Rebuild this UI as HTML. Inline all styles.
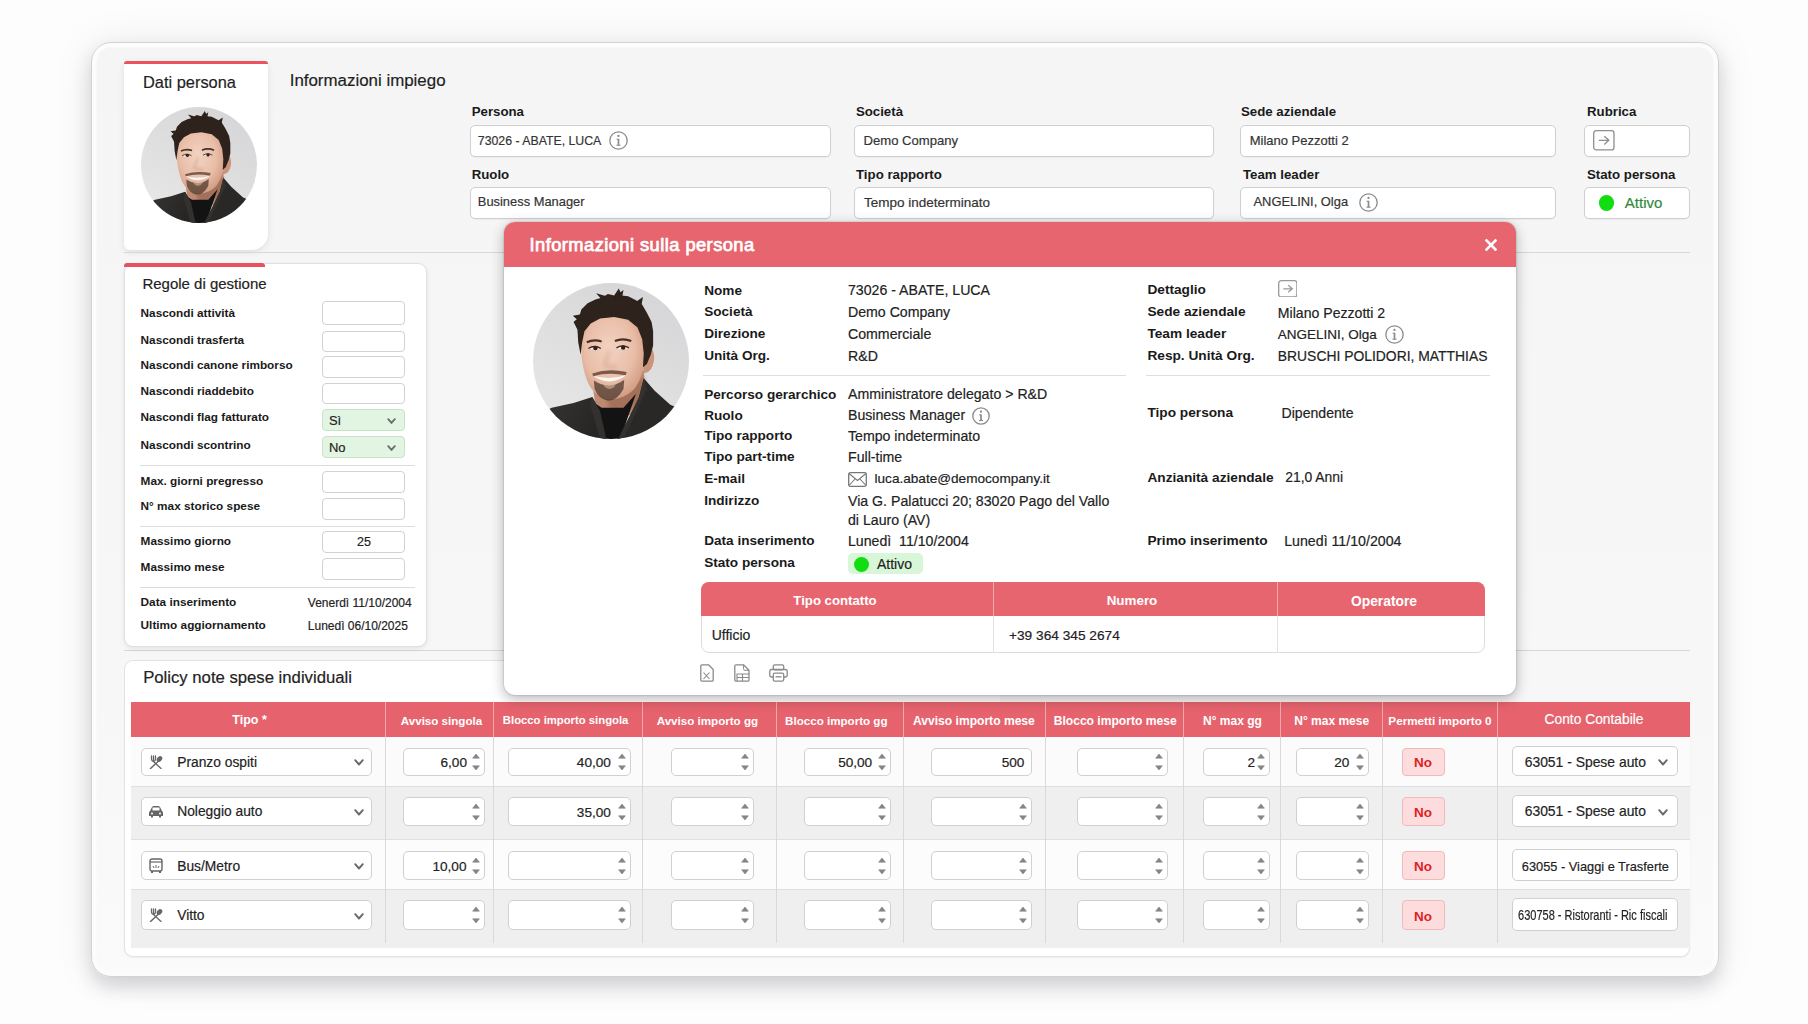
<!DOCTYPE html><html><head><meta charset="utf-8"><style>
html,body{margin:0;padding:0;background:#fff;}
#root{position:relative;width:1808px;height:1024px;overflow:hidden;background:#fdfdfd;font-family:"Liberation Sans",sans-serif;}
.t{position:absolute;white-space:nowrap;}
.r{-webkit-text-stroke:0.18px currentColor;}
.b{position:absolute;box-sizing:border-box;}
</style></head><body><div id="root">
<div class="b" style="left:91.0px;top:42.0px;width:1628.0px;height:935.0px;border-radius:20px;background:linear-gradient(#f5f5f5, #f7f7f7 70%, #fafafa);border:1.5px solid #d2d2d4;box-shadow:0 10px 18px rgba(40,40,60,0.17), 0 0 40px rgba(0,0,0,0.08), inset 0 0 0 4.5px #fcfcfc;"></div>
<div class="b" style="left:124.0px;top:61.0px;width:144.0px;height:189.0px;border-radius:7px 7px 16px 6px;background:#fff;box-shadow:0 2px 6px rgba(0,0,0,0.10);"></div>
<div class="b" style="left:124.0px;top:60.8px;width:144.0px;height:3.5px;border-radius:4px 4px 0 0;background:#e8535f;"></div>
<div class="t  r" style="left:143.0px;top:74.12px;font-size:16.4px;line-height:16.4px;color:#1e1e1e;">Dati persona</div>
<svg class="b" style="left:140.5px;top:107.0px;" width="116" height="116" viewBox="0 0 100 100">
<defs>
 <clipPath id="clipp1"><circle cx="50" cy="50" r="50"/></clipPath>
 <linearGradient id="bgp1" x1="0.8" y1="0" x2="0.2" y2="1"><stop offset="0" stop-color="#d5d5d7"/><stop offset="1" stop-color="#e8e8e8"/></linearGradient>
 <radialGradient id="skp1" cx="0.45" cy="0.4" r="0.7"><stop offset="0" stop-color="#f3d3c2"/><stop offset="0.55" stop-color="#e9bea8"/><stop offset="0.85" stop-color="#d49f86"/><stop offset="1" stop-color="#b57c63"/></radialGradient>
 <linearGradient id="jkp1" x1="0" y1="0" x2="1" y2="0.3"><stop offset="0" stop-color="#393636"/><stop offset="1" stop-color="#282525"/></linearGradient>
 <filter id="blp1" x="-20%" y="-20%" width="140%" height="140%"><feGaussianBlur stdDeviation="1.3"/></filter>
 <filter id="bl2p1" x="-20%" y="-20%" width="140%" height="140%"><feGaussianBlur stdDeviation="0.45"/></filter>
</defs>
<g clip-path="url(#clipp1)">
 <rect x="0" y="0" width="100" height="100" fill="url(#bgp1)"/>
 <path d="M38 64 L71 56 L73 84 L41 86 Z" fill="#c08a72"/>
 <path d="M47 73 L71 60 L72 78 L50 83 Z" fill="#8f5f4c" filter="url(#blp1)" opacity="0.6"/>
 <path d="M31 38 C32 28 40 21 51 20.5 C62 21 70 28 71.5 40 C72 52 70 61 65 68 C60 73 54 75 48 74.5 C42 73.5 37 69 34.5 62 C32 55 30.5 47 31 38 Z" fill="url(#skp1)"/>
 <path d="M71.5 42 C75.5 39 78.5 44 77.5 50 C76.5 56 73 58.5 70.5 57.5 Z" fill="#cc957b"/>
 <g filter="url(#bl2p1)">
 <path d="M30.5 46 L29 38 L28.5 30 L26 25 L29.5 22 L31 17 L35 13 L40 10.5 L44 9.5 L48 7 L52 8 L55 3.5 L57 8 L61 8.5 L66 11 L70 14 L73 19 L76 25 L77 31 L77 40 L75.5 46 L73 52 L70.5 54 L71 45 L70 36 L67 28.5 L61 23.5 L52 21.8 L43 22.8 L37 26 L33 31 L31.5 38 Z" fill="#2d201a"/>
 <path d="M52 9 L58 4.5 L57 10 Z M44 10.5 L40.5 6.5 L47 8.5 Z M66 12 L70.5 9 L69.5 14.5 Z M29 24 L25.5 21 L31 20 Z" fill="#2d201a"/>
 </g>
 <path d="M35.5 42 Q39.5 39.6 43.5 42 Q39.5 43.6 35.5 42 Z" fill="#f4eeea"/>
 <path d="M53.5 41.6 Q57.5 39.2 61.5 41.6 Q57.5 43.2 53.5 41.6 Z" fill="#f4eeea"/>
 <circle cx="40" cy="41.7" r="1.45" fill="#2e211b"/>
 <circle cx="57.8" cy="41.3" r="1.45" fill="#2e211b"/>
 <path d="M35.5 42 Q39.5 39.4 43.5 42" stroke="#3a2720" stroke-width="0.8" fill="none"/>
 <path d="M53.5 41.6 Q57.5 39 61.5 41.6" stroke="#3a2720" stroke-width="0.8" fill="none"/>
 <path d="M34.5 38 Q39 35.8 44 37.5" stroke="#4a3026" stroke-width="1.4" fill="none"/>
 <path d="M52.5 37.2 Q57.5 35 63 37.2" stroke="#4a3026" stroke-width="1.4" fill="none"/>
 <path d="M49 43 Q47 50 46 52.5 Q49 55 53.5 53.5" stroke="#a9705a" stroke-width="1.5" fill="none" opacity="0.35" filter="url(#blp1)"/>
 <path d="M38 58 Q48 54.5 60 57 L59.5 59.2 Q48 57 38.5 59.8 Z" fill="#5e4034" opacity="0.8" filter="url(#bl2p1)"/>
 <path d="M38.5 59.5 Q49 67 60 59 Q49 62.5 38.5 59.5 Z" fill="#faf6f3"/>
 <path d="M39 62.5 Q49 69 58.5 62 L58 68 Q54 75.5 48 75.5 Q42 74.5 39.5 68 Z" fill="#4a362c" opacity="0.72" filter="url(#bl2p1)"/>
 <path d="M45 64.5 Q49 66.5 53 64.3 Q53 67.5 49 68 Q45.5 67.5 45 64.5 Z" fill="#e6bda8" opacity="0.55"/>
 <path d="M0 86 L12 80 L26 77 L38 73 L43 82 L46 100 L0 100 Z" fill="url(#jkp1)"/>
 <path d="M71 61 L78 69 L88 78 L100 83 L100 100 L54 100 L62 86 L68 73 Z" fill="#2a2727"/>
 <path d="M38 76 L44 80 L58 80 L66 71 L56 100 L45 100 Z" fill="#141313"/>
 <path d="M38 73 L43 82 L47 100 L43 100 L36.5 78 Z" fill="#333030"/>
 <path d="M71 61 L73 68 L58 100 L54.5 100 L68 73 Z" fill="#333030"/>
</g></svg>
<div class="t  r" style="left:289.7px;top:72.79px;font-size:16.9px;line-height:16.9px;color:#1e1e1e;">Informazioni impiego</div>
<div class="t " style="left:471.7px;top:104.78px;font-size:13.25px;line-height:13.25px;font-weight:700;color:#1a1a1a;">Persona</div>
<div class="t " style="left:855.9px;top:104.78px;font-size:13.25px;line-height:13.25px;font-weight:700;color:#1a1a1a;">Società</div>
<div class="t " style="left:1241.0px;top:104.78px;font-size:13.25px;line-height:13.25px;font-weight:700;color:#1a1a1a;">Sede aziendale</div>
<div class="t " style="left:1587.0px;top:104.78px;font-size:13.25px;line-height:13.25px;font-weight:700;color:#1a1a1a;">Rubrica</div>
<div class="t " style="left:471.7px;top:168.18px;font-size:13.25px;line-height:13.25px;font-weight:700;color:#1a1a1a;">Ruolo</div>
<div class="t " style="left:856.0px;top:168.18px;font-size:13.25px;line-height:13.25px;font-weight:700;color:#1a1a1a;">Tipo rapporto</div>
<div class="t " style="left:1243.0px;top:168.18px;font-size:13.25px;line-height:13.25px;font-weight:700;color:#1a1a1a;">Team leader</div>
<div class="t " style="left:1587.0px;top:168.18px;font-size:13.25px;line-height:13.25px;font-weight:700;color:#1a1a1a;">Stato persona</div>
<div class="b" style="left:469.5px;top:124.5px;width:361.5px;height:32.1px;background:#fff;border:1px solid #cfcfcf;border-radius:5px;box-shadow:0 1px 1px rgba(0,0,0,0.04);"></div>
<div class="b" style="left:469.5px;top:187.4px;width:361.5px;height:31.4px;background:#fff;border:1px solid #cfcfcf;border-radius:5px;box-shadow:0 1px 1px rgba(0,0,0,0.04);"></div>
<div class="b" style="left:854.0px;top:124.5px;width:360.0px;height:32.1px;background:#fff;border:1px solid #cfcfcf;border-radius:5px;box-shadow:0 1px 1px rgba(0,0,0,0.04);"></div>
<div class="b" style="left:854.0px;top:187.4px;width:360.0px;height:31.4px;background:#fff;border:1px solid #cfcfcf;border-radius:5px;box-shadow:0 1px 1px rgba(0,0,0,0.04);"></div>
<div class="b" style="left:1239.8px;top:124.5px;width:316.2px;height:32.1px;background:#fff;border:1px solid #cfcfcf;border-radius:5px;box-shadow:0 1px 1px rgba(0,0,0,0.04);"></div>
<div class="b" style="left:1239.8px;top:187.4px;width:316.2px;height:31.4px;background:#fff;border:1px solid #cfcfcf;border-radius:5px;box-shadow:0 1px 1px rgba(0,0,0,0.04);"></div>
<div class="b" style="left:1584.4px;top:124.5px;width:105.2px;height:32.1px;background:#fff;border:1px solid #cfcfcf;border-radius:5px;box-shadow:0 1px 1px rgba(0,0,0,0.04);"></div>
<div class="b" style="left:1584.4px;top:187.4px;width:105.2px;height:31.4px;background:#fff;border:1px solid #cfcfcf;border-radius:5px;box-shadow:0 1px 1px rgba(0,0,0,0.04);"></div>
<div class="t  r" style="left:477.8px;top:134.79px;font-size:12.3px;line-height:12.3px;color:#333;">73026 - ABATE, LUCA</div>
<svg class="b" style="left:609.0px;top:131.0px;" width="19" height="19" viewBox="0 0 19 19"><circle cx="9.5" cy="9.5" r="8.7" fill="none" stroke="#8a8a8a" stroke-width="1.3"/><rect x="8.65" y="7.789999999999999" width="1.7" height="6.2700000000000005" fill="#8a8a8a"/><rect x="7.6" y="7.789999999999999" width="1.9" height="1" fill="#8a8a8a"/><rect x="7.5" y="13.68" width="4" height="1.1" fill="#8a8a8a"/><circle cx="9.5" cy="4.94" r="1.15" fill="#8a8a8a"/></svg>
<div class="t  r" style="left:863.5px;top:134.11px;font-size:13.1px;line-height:13.1px;color:#333;">Demo Company</div>
<div class="t  r" style="left:1249.7px;top:134.20px;font-size:13.0px;line-height:13.0px;color:#333;">Milano Pezzotti 2</div>
<svg class="b" style="left:1593.0px;top:130.3px;" width="21.700000000000045" height="20.599999999999994" viewBox="0 0 21.700000000000045 20.599999999999994"><rect x="0.7" y="0.7" width="20.300000000000047" height="19.199999999999996" rx="2.5" fill="#fff" stroke="#8f8f8f" stroke-width="1.3"/><path d="M5.859000000000012 10.299999999999997 H15.624000000000033 M11.284000000000024 6.179999999999998 L15.841000000000033 10.299999999999997 L11.284000000000024 14.419999999999995" fill="none" stroke="#8f8f8f" stroke-width="1.3"/></svg>
<div class="t  r" style="left:477.8px;top:196.48px;font-size:12.9px;line-height:12.9px;color:#333;">Business Manager</div>
<div class="t  r" style="left:864.0px;top:195.97px;font-size:13.5px;line-height:13.5px;color:#333;">Tempo indeterminato</div>
<div class="t  r" style="left:1253.5px;top:196.48px;font-size:12.9px;line-height:12.9px;color:#333;">ANGELINI, Olga</div>
<svg class="b" style="left:1359.0px;top:193.0px;" width="19" height="19" viewBox="0 0 19 19"><circle cx="9.5" cy="9.5" r="8.7" fill="none" stroke="#8a8a8a" stroke-width="1.3"/><rect x="8.65" y="7.789999999999999" width="1.7" height="6.2700000000000005" fill="#8a8a8a"/><rect x="7.6" y="7.789999999999999" width="1.9" height="1" fill="#8a8a8a"/><rect x="7.5" y="13.68" width="4" height="1.1" fill="#8a8a8a"/><circle cx="9.5" cy="4.94" r="1.15" fill="#8a8a8a"/></svg>
<div class="b" style="left:1598.7px;top:195.2px;width:15.6px;height:15.6px;border-radius:50%;background:#11dd11;"></div>
<div class="t  r" style="left:1624.8px;top:195.10px;font-size:15px;line-height:15px;color:#2f8a3a;">Attivo</div>
<div class="b" style="left:124.0px;top:252.0px;width:1566.0px;height:1.2px;background:#d8d8d8;"></div>
<div class="b" style="left:124.0px;top:649.5px;width:1566.0px;height:1.2px;background:#d8d8d8;"></div>
<div class="b" style="left:124.0px;top:263.4px;width:303.0px;height:383.4px;background:#fff;border:1px solid #e0e0e0;border-radius:9px;box-shadow:0 2px 5px rgba(0,0,0,0.08);"></div>
<div class="b" style="left:124.0px;top:263.4px;width:141.0px;height:3.2px;background:#e8525f;border-radius:3px 3px 0 0;"></div>
<div class="t  r" style="left:142.4px;top:276.30px;font-size:15px;line-height:15px;color:#222;">Regole di gestione</div>
<div class="t " style="left:140.6px;top:308.01px;font-size:11.8px;line-height:11.8px;font-weight:700;color:#1a1a1a;">Nascondi attività</div>
<div class="t " style="left:140.6px;top:334.51px;font-size:11.8px;line-height:11.8px;font-weight:700;color:#1a1a1a;">Nascondi trasferta</div>
<div class="t " style="left:140.6px;top:360.11px;font-size:11.8px;line-height:11.8px;font-weight:700;color:#1a1a1a;">Nascondi canone rimborso</div>
<div class="t " style="left:140.6px;top:386.21px;font-size:11.8px;line-height:11.8px;font-weight:700;color:#1a1a1a;">Nascondi riaddebito</div>
<div class="t " style="left:140.6px;top:411.81px;font-size:11.8px;line-height:11.8px;font-weight:700;color:#1a1a1a;">Nascondi flag fatturato</div>
<div class="t " style="left:140.6px;top:439.61px;font-size:11.8px;line-height:11.8px;font-weight:700;color:#1a1a1a;">Nascondi scontrino</div>
<div class="t " style="left:140.6px;top:476.01px;font-size:11.8px;line-height:11.8px;font-weight:700;color:#1a1a1a;">Max. giorni pregresso</div>
<div class="t " style="left:140.6px;top:501.01px;font-size:11.8px;line-height:11.8px;font-weight:700;color:#1a1a1a;">N° max storico spese</div>
<div class="t " style="left:140.6px;top:536.11px;font-size:11.8px;line-height:11.8px;font-weight:700;color:#1a1a1a;">Massimo giorno</div>
<div class="t " style="left:140.6px;top:561.71px;font-size:11.8px;line-height:11.8px;font-weight:700;color:#1a1a1a;">Massimo mese</div>
<div class="t " style="left:140.6px;top:597.21px;font-size:11.8px;line-height:11.8px;font-weight:700;color:#1a1a1a;">Data inserimento</div>
<div class="t " style="left:140.6px;top:619.81px;font-size:11.8px;line-height:11.8px;font-weight:700;color:#1a1a1a;">Ultimo aggiornamento</div>
<div class="b" style="left:321.6px;top:300.5px;width:83.0px;height:24.0px;background:#fff;border:1px solid #d2d2d2;border-radius:4px;"></div>
<div class="b" style="left:321.6px;top:331.0px;width:83.0px;height:20.5px;background:#fff;border:1px solid #d2d2d2;border-radius:4px;"></div>
<div class="b" style="left:321.6px;top:356.0px;width:83.0px;height:21.5px;background:#fff;border:1px solid #d2d2d2;border-radius:4px;"></div>
<div class="b" style="left:321.6px;top:382.6px;width:83.0px;height:21.6px;background:#fff;border:1px solid #d2d2d2;border-radius:4px;"></div>
<div class="b" style="left:321.6px;top:471.4px;width:83.0px;height:21.6px;background:#fff;border:1px solid #d2d2d2;border-radius:4px;"></div>
<div class="b" style="left:321.6px;top:497.7px;width:83.0px;height:22.3px;background:#fff;border:1px solid #d2d2d2;border-radius:4px;"></div>
<div class="b" style="left:321.6px;top:530.7px;width:83.0px;height:22.4px;background:#fff;border:1px solid #d2d2d2;border-radius:4px;"></div>
<div class="b" style="left:321.6px;top:558.1px;width:83.0px;height:22.4px;background:#fff;border:1px solid #d2d2d2;border-radius:4px;"></div>
<div class="b" style="left:321.6px;top:408.8px;width:83.0px;height:22.4px;background:#e2f5e2;border:1px solid #c9e3c9;border-radius:4px;"></div>
<div class="b" style="left:321.6px;top:436.2px;width:83.0px;height:22.0px;background:#e2f5e2;border:1px solid #c9e3c9;border-radius:4px;"></div>
<div class="t  r" style="left:328.9px;top:413.50px;font-size:13px;line-height:13px;color:#222;">Sì</div>
<svg class="b" style="left:386.8px;top:417.5px;" width="9" height="6.45" viewBox="0 0 9 6.45"><path d="M1.2 1.2 L4.5 4.95 L7.8 1.2" fill="none" stroke="#707070" stroke-width="1.9" stroke-linecap="round" stroke-linejoin="round"/></svg>
<div class="t  r" style="left:328.9px;top:441.00px;font-size:13px;line-height:13px;color:#222;">No</div>
<svg class="b" style="left:386.8px;top:444.5px;" width="9" height="6.45" viewBox="0 0 9 6.45"><path d="M1.2 1.2 L4.5 4.95 L7.8 1.2" fill="none" stroke="#707070" stroke-width="1.9" stroke-linecap="round" stroke-linejoin="round"/></svg>
<div class="t r" style="left:164.0px;width:400px;text-align:center;top:535.92px;font-size:12.5px;line-height:12.5px;color:#222;">25</div>
<div class="b" style="left:140.0px;top:465.0px;width:275.4px;height:1.0px;background:#dcdcdc;"></div>
<div class="b" style="left:140.0px;top:525.5px;width:275.4px;height:1.0px;background:#dcdcdc;"></div>
<div class="b" style="left:140.0px;top:586.6px;width:275.4px;height:1.0px;background:#dcdcdc;"></div>
<div class="t  r" style="left:307.8px;top:597.04px;font-size:12px;line-height:12px;color:#222;">Venerdì 11/10/2004</div>
<div class="t  r" style="left:307.8px;top:619.64px;font-size:12px;line-height:12px;color:#222;">Lunedì 06/10/2025</div>
<div class="b" style="left:124.0px;top:660.0px;width:876.0px;height:50.0px;background:#fff;border:1px solid #e2e2e2;border-right:none;border-bottom:none;border-radius:9px 0 0 0;"></div>
<div class="b" style="left:124.0px;top:702.0px;width:1566.0px;height:255.4px;background:#fff;border:1px solid #e2e2e2;border-top:none;border-radius:0 0 9px 9px;box-shadow:0 1px 2px rgba(0,0,0,0.05);"></div>
<div class="t  r" style="left:143.2px;top:670.16px;font-size:16.7px;line-height:16.7px;color:#222;">Policy note spese individuali</div>
<div class="b" style="left:131.2px;top:736.8px;width:1558.6px;height:211.7px;background:#efefef;"></div>
<div class="b" style="left:131.2px;top:736.8px;width:1558.6px;height:49.5px;background:#fbfbfb;"></div>
<div class="b" style="left:131.2px;top:839.7px;width:1558.6px;height:49.9px;background:#fcfcfc;"></div>
<div class="b" style="left:131.2px;top:785.8px;width:1558.6px;height:1.0px;background:#dfdfdf;"></div>
<div class="b" style="left:131.2px;top:839.2px;width:1558.6px;height:1.0px;background:#dfdfdf;"></div>
<div class="b" style="left:131.2px;top:889.1px;width:1558.6px;height:1.0px;background:#dfdfdf;"></div>
<div class="b" style="left:131.2px;top:702.0px;width:1558.6px;height:34.8px;background:#e6636e;"></div>
<div class="b" style="left:384.9px;top:702.0px;width:1.0px;height:34.8px;background:#f3a8ae;"></div>
<div class="b" style="left:384.9px;top:736.8px;width:1.0px;height:205.8px;background:#d9d9d9;"></div>
<div class="b" style="left:493.1px;top:702.0px;width:1.0px;height:34.8px;background:#f3a8ae;"></div>
<div class="b" style="left:493.1px;top:736.8px;width:1.0px;height:205.8px;background:#d9d9d9;"></div>
<div class="b" style="left:641.9px;top:702.0px;width:1.0px;height:34.8px;background:#f3a8ae;"></div>
<div class="b" style="left:641.9px;top:736.8px;width:1.0px;height:205.8px;background:#d9d9d9;"></div>
<div class="b" style="left:775.8px;top:702.0px;width:1.0px;height:34.8px;background:#f3a8ae;"></div>
<div class="b" style="left:775.8px;top:736.8px;width:1.0px;height:205.8px;background:#d9d9d9;"></div>
<div class="b" style="left:903.1px;top:702.0px;width:1.0px;height:34.8px;background:#f3a8ae;"></div>
<div class="b" style="left:903.1px;top:736.8px;width:1.0px;height:205.8px;background:#d9d9d9;"></div>
<div class="b" style="left:1044.8px;top:702.0px;width:1.0px;height:34.8px;background:#f3a8ae;"></div>
<div class="b" style="left:1044.8px;top:736.8px;width:1.0px;height:205.8px;background:#d9d9d9;"></div>
<div class="b" style="left:1182.6px;top:702.0px;width:1.0px;height:34.8px;background:#f3a8ae;"></div>
<div class="b" style="left:1182.6px;top:736.8px;width:1.0px;height:205.8px;background:#d9d9d9;"></div>
<div class="b" style="left:1280.3px;top:702.0px;width:1.0px;height:34.8px;background:#f3a8ae;"></div>
<div class="b" style="left:1280.3px;top:736.8px;width:1.0px;height:205.8px;background:#d9d9d9;"></div>
<div class="b" style="left:1381.8px;top:702.0px;width:1.0px;height:34.8px;background:#f3a8ae;"></div>
<div class="b" style="left:1381.8px;top:736.8px;width:1.0px;height:205.8px;background:#d9d9d9;"></div>
<div class="b" style="left:1497.0px;top:702.0px;width:1.0px;height:34.8px;background:#f3a8ae;"></div>
<div class="b" style="left:1497.0px;top:736.8px;width:1.0px;height:205.8px;background:#d9d9d9;"></div>
<div class="t" style="left:49.5px;width:400px;text-align:center;top:714.22px;font-size:12.5px;line-height:12.5px;font-weight:700;color:#fff;">Tipo *</div>
<div class="t" style="left:241.5px;width:400px;text-align:center;top:714.98px;font-size:11.6px;line-height:11.6px;font-weight:700;color:#fff;">Avviso singola</div>
<div class="t" style="left:365.6px;width:400px;text-align:center;top:715.23px;font-size:11.3px;line-height:11.3px;font-weight:700;color:#fff;">Blocco importo singola</div>
<div class="t" style="left:507.4px;width:400px;text-align:center;top:714.98px;font-size:11.6px;line-height:11.6px;font-weight:700;color:#fff;">Avviso importo gg</div>
<div class="t" style="left:636.3px;width:400px;text-align:center;top:714.98px;font-size:11.6px;line-height:11.6px;font-weight:700;color:#fff;">Blocco importo gg</div>
<div class="t" style="left:773.9px;width:400px;text-align:center;top:714.56px;font-size:12.1px;line-height:12.1px;font-weight:700;color:#fff;">Avviso importo mese</div>
<div class="t" style="left:915.2px;width:400px;text-align:center;top:714.56px;font-size:12.1px;line-height:12.1px;font-weight:700;color:#fff;">Blocco importo mese</div>
<div class="t" style="left:1032.4px;width:400px;text-align:center;top:714.64px;font-size:12px;line-height:12px;font-weight:700;color:#fff;">N° max gg</div>
<div class="t" style="left:1131.7px;width:400px;text-align:center;top:714.64px;font-size:12px;line-height:12px;font-weight:700;color:#fff;">N° max mese</div>
<div class="t" style="left:1240.0px;width:400px;text-align:center;top:714.90px;font-size:11.7px;line-height:11.7px;font-weight:700;color:#fff;">Permetti importo 0</div>
<div class="t r" style="left:1394.0px;width:400px;text-align:center;top:713.32px;font-size:13.8px;line-height:13.8px;color:#fff;">Conto Contabile</div>
<div class="b" style="left:141.3px;top:747.8px;width:231.2px;height:28.2px;background:#fff;border:1px solid #d0d0d0;border-radius:5px;"></div>
<div class="t  r" style="left:177.2px;top:755.72px;font-size:13.8px;line-height:13.8px;color:#222;">Pranzo ospiti</div>
<svg class="b" style="left:354.0px;top:759.1px;" width="10" height="7.0" viewBox="0 0 10 7.0"><path d="M1.2 1.2 L5.0 5.5 L8.8 1.2" fill="none" stroke="#6a6a6a" stroke-width="1.9" stroke-linecap="round" stroke-linejoin="round"/></svg>
<div class="b" style="left:402.5px;top:747.8px;width:82.9px;height:28.2px;background:#fff;border:1px solid #d0d0d0;border-radius:5px;"></div>
<svg class="b" style="left:472.2px;top:752.9px;" width="8" height="18" viewBox="0 0 8 18"><path d="M0.6 5.2 L4 1 L7.4 5.2 Z" fill="#858585" stroke="#858585" stroke-width="0.6" stroke-linejoin="round"/><path d="M0.6 12.8 L4 17 L7.4 12.8 Z" fill="#858585" stroke="#858585" stroke-width="0.6" stroke-linejoin="round"/></svg>
<div class="t r" style="left:67.0px;width:400px;text-align:right;top:756.19px;font-size:13.6px;line-height:13.6px;color:#222;">6,00</div>
<div class="b" style="left:508.2px;top:747.8px;width:123.1px;height:28.2px;background:#fff;border:1px solid #d0d0d0;border-radius:5px;"></div>
<svg class="b" style="left:618.1px;top:752.9px;" width="8" height="18" viewBox="0 0 8 18"><path d="M0.6 5.2 L4 1 L7.4 5.2 Z" fill="#858585" stroke="#858585" stroke-width="0.6" stroke-linejoin="round"/><path d="M0.6 12.8 L4 17 L7.4 12.8 Z" fill="#858585" stroke="#858585" stroke-width="0.6" stroke-linejoin="round"/></svg>
<div class="t r" style="left:210.9px;width:400px;text-align:right;top:756.19px;font-size:13.6px;line-height:13.6px;color:#222;">40,00</div>
<div class="b" style="left:670.8px;top:747.8px;width:83.6px;height:28.2px;background:#fff;border:1px solid #d0d0d0;border-radius:5px;"></div>
<svg class="b" style="left:741.2px;top:752.9px;" width="8" height="18" viewBox="0 0 8 18"><path d="M0.6 5.2 L4 1 L7.4 5.2 Z" fill="#858585" stroke="#858585" stroke-width="0.6" stroke-linejoin="round"/><path d="M0.6 12.8 L4 17 L7.4 12.8 Z" fill="#858585" stroke="#858585" stroke-width="0.6" stroke-linejoin="round"/></svg>
<div class="b" style="left:804.4px;top:747.8px;width:87.1px;height:28.2px;background:#fff;border:1px solid #d0d0d0;border-radius:5px;"></div>
<svg class="b" style="left:878.3px;top:752.9px;" width="8" height="18" viewBox="0 0 8 18"><path d="M0.6 5.2 L4 1 L7.4 5.2 Z" fill="#858585" stroke="#858585" stroke-width="0.6" stroke-linejoin="round"/><path d="M0.6 12.8 L4 17 L7.4 12.8 Z" fill="#858585" stroke="#858585" stroke-width="0.6" stroke-linejoin="round"/></svg>
<div class="t r" style="left:472.2px;width:400px;text-align:right;top:756.19px;font-size:13.6px;line-height:13.6px;color:#222;">50,00</div>
<div class="b" style="left:931.4px;top:747.8px;width:100.4px;height:28.2px;background:#fff;border:1px solid #d0d0d0;border-radius:5px;"></div>
<div class="t r" style="left:624.4px;width:400px;text-align:right;top:756.19px;font-size:13.6px;line-height:13.6px;color:#222;">500</div>
<div class="b" style="left:1077.3px;top:747.8px;width:91.1px;height:28.2px;background:#fff;border:1px solid #d0d0d0;border-radius:5px;"></div>
<svg class="b" style="left:1155.2px;top:752.9px;" width="8" height="18" viewBox="0 0 8 18"><path d="M0.6 5.2 L4 1 L7.4 5.2 Z" fill="#858585" stroke="#858585" stroke-width="0.6" stroke-linejoin="round"/><path d="M0.6 12.8 L4 17 L7.4 12.8 Z" fill="#858585" stroke="#858585" stroke-width="0.6" stroke-linejoin="round"/></svg>
<div class="b" style="left:1203.1px;top:747.8px;width:66.6px;height:28.2px;background:#fff;border:1px solid #d0d0d0;border-radius:5px;"></div>
<svg class="b" style="left:1256.5px;top:752.9px;" width="8" height="18" viewBox="0 0 8 18"><path d="M0.6 5.2 L4 1 L7.4 5.2 Z" fill="#858585" stroke="#858585" stroke-width="0.6" stroke-linejoin="round"/><path d="M0.6 12.8 L4 17 L7.4 12.8 Z" fill="#858585" stroke="#858585" stroke-width="0.6" stroke-linejoin="round"/></svg>
<div class="t r" style="left:855.0px;width:400px;text-align:right;top:756.19px;font-size:13.6px;line-height:13.6px;color:#222;">2</div>
<div class="b" style="left:1296.0px;top:747.8px;width:73.4px;height:28.2px;background:#fff;border:1px solid #d0d0d0;border-radius:5px;"></div>
<svg class="b" style="left:1356.2px;top:752.9px;" width="8" height="18" viewBox="0 0 8 18"><path d="M0.6 5.2 L4 1 L7.4 5.2 Z" fill="#858585" stroke="#858585" stroke-width="0.6" stroke-linejoin="round"/><path d="M0.6 12.8 L4 17 L7.4 12.8 Z" fill="#858585" stroke="#858585" stroke-width="0.6" stroke-linejoin="round"/></svg>
<div class="t r" style="left:949.4px;width:400px;text-align:right;top:756.19px;font-size:13.6px;line-height:13.6px;color:#222;">20</div>
<div class="b" style="left:1401.6px;top:747.8px;width:43.1px;height:28.2px;background:#fcdcdc;border:1px solid #f2b9b9;border-radius:4px;"></div>
<div class="t" style="left:1223.1px;width:400px;text-align:center;top:756.27px;font-size:13.5px;line-height:13.5px;font-weight:700;color:#dc1f26;">No</div>
<div class="b" style="left:1512.4px;top:745.8px;width:165.6px;height:30.7px;background:#fff;border:1px solid #d0d0d0;border-radius:5px;"></div>
<div class="b" style="left:141.3px;top:796.6px;width:231.2px;height:29.9px;background:#fff;border:1px solid #d0d0d0;border-radius:5px;"></div>
<div class="t  r" style="left:177.2px;top:805.37px;font-size:13.8px;line-height:13.8px;color:#222;">Noleggio auto</div>
<svg class="b" style="left:354.0px;top:808.8px;" width="10" height="7.0" viewBox="0 0 10 7.0"><path d="M1.2 1.2 L5.0 5.5 L8.8 1.2" fill="none" stroke="#6a6a6a" stroke-width="1.9" stroke-linecap="round" stroke-linejoin="round"/></svg>
<div class="b" style="left:402.5px;top:796.6px;width:82.9px;height:29.9px;background:#fff;border:1px solid #d0d0d0;border-radius:5px;"></div>
<svg class="b" style="left:472.2px;top:802.5px;" width="8" height="18" viewBox="0 0 8 18"><path d="M0.6 5.2 L4 1 L7.4 5.2 Z" fill="#858585" stroke="#858585" stroke-width="0.6" stroke-linejoin="round"/><path d="M0.6 12.8 L4 17 L7.4 12.8 Z" fill="#858585" stroke="#858585" stroke-width="0.6" stroke-linejoin="round"/></svg>
<div class="b" style="left:508.2px;top:796.6px;width:123.1px;height:29.9px;background:#fff;border:1px solid #d0d0d0;border-radius:5px;"></div>
<svg class="b" style="left:618.1px;top:802.5px;" width="8" height="18" viewBox="0 0 8 18"><path d="M0.6 5.2 L4 1 L7.4 5.2 Z" fill="#858585" stroke="#858585" stroke-width="0.6" stroke-linejoin="round"/><path d="M0.6 12.8 L4 17 L7.4 12.8 Z" fill="#858585" stroke="#858585" stroke-width="0.6" stroke-linejoin="round"/></svg>
<div class="t r" style="left:210.9px;width:400px;text-align:right;top:805.84px;font-size:13.6px;line-height:13.6px;color:#222;">35,00</div>
<div class="b" style="left:670.8px;top:796.6px;width:83.6px;height:29.9px;background:#fff;border:1px solid #d0d0d0;border-radius:5px;"></div>
<svg class="b" style="left:741.2px;top:802.5px;" width="8" height="18" viewBox="0 0 8 18"><path d="M0.6 5.2 L4 1 L7.4 5.2 Z" fill="#858585" stroke="#858585" stroke-width="0.6" stroke-linejoin="round"/><path d="M0.6 12.8 L4 17 L7.4 12.8 Z" fill="#858585" stroke="#858585" stroke-width="0.6" stroke-linejoin="round"/></svg>
<div class="b" style="left:804.4px;top:796.6px;width:87.1px;height:29.9px;background:#fff;border:1px solid #d0d0d0;border-radius:5px;"></div>
<svg class="b" style="left:878.3px;top:802.5px;" width="8" height="18" viewBox="0 0 8 18"><path d="M0.6 5.2 L4 1 L7.4 5.2 Z" fill="#858585" stroke="#858585" stroke-width="0.6" stroke-linejoin="round"/><path d="M0.6 12.8 L4 17 L7.4 12.8 Z" fill="#858585" stroke="#858585" stroke-width="0.6" stroke-linejoin="round"/></svg>
<div class="b" style="left:931.4px;top:796.6px;width:100.4px;height:29.9px;background:#fff;border:1px solid #d0d0d0;border-radius:5px;"></div>
<svg class="b" style="left:1018.6px;top:802.5px;" width="8" height="18" viewBox="0 0 8 18"><path d="M0.6 5.2 L4 1 L7.4 5.2 Z" fill="#858585" stroke="#858585" stroke-width="0.6" stroke-linejoin="round"/><path d="M0.6 12.8 L4 17 L7.4 12.8 Z" fill="#858585" stroke="#858585" stroke-width="0.6" stroke-linejoin="round"/></svg>
<div class="b" style="left:1077.3px;top:796.6px;width:91.1px;height:29.9px;background:#fff;border:1px solid #d0d0d0;border-radius:5px;"></div>
<svg class="b" style="left:1155.2px;top:802.5px;" width="8" height="18" viewBox="0 0 8 18"><path d="M0.6 5.2 L4 1 L7.4 5.2 Z" fill="#858585" stroke="#858585" stroke-width="0.6" stroke-linejoin="round"/><path d="M0.6 12.8 L4 17 L7.4 12.8 Z" fill="#858585" stroke="#858585" stroke-width="0.6" stroke-linejoin="round"/></svg>
<div class="b" style="left:1203.1px;top:796.6px;width:66.6px;height:29.9px;background:#fff;border:1px solid #d0d0d0;border-radius:5px;"></div>
<svg class="b" style="left:1256.5px;top:802.5px;" width="8" height="18" viewBox="0 0 8 18"><path d="M0.6 5.2 L4 1 L7.4 5.2 Z" fill="#858585" stroke="#858585" stroke-width="0.6" stroke-linejoin="round"/><path d="M0.6 12.8 L4 17 L7.4 12.8 Z" fill="#858585" stroke="#858585" stroke-width="0.6" stroke-linejoin="round"/></svg>
<div class="b" style="left:1296.0px;top:796.6px;width:73.4px;height:29.9px;background:#fff;border:1px solid #d0d0d0;border-radius:5px;"></div>
<svg class="b" style="left:1356.2px;top:802.5px;" width="8" height="18" viewBox="0 0 8 18"><path d="M0.6 5.2 L4 1 L7.4 5.2 Z" fill="#858585" stroke="#858585" stroke-width="0.6" stroke-linejoin="round"/><path d="M0.6 12.8 L4 17 L7.4 12.8 Z" fill="#858585" stroke="#858585" stroke-width="0.6" stroke-linejoin="round"/></svg>
<div class="b" style="left:1401.6px;top:796.6px;width:43.1px;height:29.9px;background:#fcdcdc;border:1px solid #f2b9b9;border-radius:4px;"></div>
<div class="t" style="left:1223.1px;width:400px;text-align:center;top:805.92px;font-size:13.5px;line-height:13.5px;font-weight:700;color:#dc1f26;">No</div>
<div class="b" style="left:1512.4px;top:794.6px;width:165.6px;height:32.4px;background:#fff;border:1px solid #d0d0d0;border-radius:5px;"></div>
<div class="b" style="left:141.3px;top:851.4px;width:231.2px;height:29.1px;background:#fff;border:1px solid #d0d0d0;border-radius:5px;"></div>
<div class="t  r" style="left:177.2px;top:859.77px;font-size:13.8px;line-height:13.8px;color:#222;">Bus/Metro</div>
<svg class="b" style="left:354.0px;top:863.2px;" width="10" height="7.0" viewBox="0 0 10 7.0"><path d="M1.2 1.2 L5.0 5.5 L8.8 1.2" fill="none" stroke="#6a6a6a" stroke-width="1.9" stroke-linecap="round" stroke-linejoin="round"/></svg>
<div class="b" style="left:402.5px;top:851.4px;width:82.9px;height:29.1px;background:#fff;border:1px solid #d0d0d0;border-radius:5px;"></div>
<svg class="b" style="left:472.2px;top:857.0px;" width="8" height="18" viewBox="0 0 8 18"><path d="M0.6 5.2 L4 1 L7.4 5.2 Z" fill="#858585" stroke="#858585" stroke-width="0.6" stroke-linejoin="round"/><path d="M0.6 12.8 L4 17 L7.4 12.8 Z" fill="#858585" stroke="#858585" stroke-width="0.6" stroke-linejoin="round"/></svg>
<div class="t r" style="left:66.5px;width:400px;text-align:right;top:860.24px;font-size:13.6px;line-height:13.6px;color:#222;">10,00</div>
<div class="b" style="left:508.2px;top:851.4px;width:123.1px;height:29.1px;background:#fff;border:1px solid #d0d0d0;border-radius:5px;"></div>
<svg class="b" style="left:618.1px;top:857.0px;" width="8" height="18" viewBox="0 0 8 18"><path d="M0.6 5.2 L4 1 L7.4 5.2 Z" fill="#858585" stroke="#858585" stroke-width="0.6" stroke-linejoin="round"/><path d="M0.6 12.8 L4 17 L7.4 12.8 Z" fill="#858585" stroke="#858585" stroke-width="0.6" stroke-linejoin="round"/></svg>
<div class="b" style="left:670.8px;top:851.4px;width:83.6px;height:29.1px;background:#fff;border:1px solid #d0d0d0;border-radius:5px;"></div>
<svg class="b" style="left:741.2px;top:857.0px;" width="8" height="18" viewBox="0 0 8 18"><path d="M0.6 5.2 L4 1 L7.4 5.2 Z" fill="#858585" stroke="#858585" stroke-width="0.6" stroke-linejoin="round"/><path d="M0.6 12.8 L4 17 L7.4 12.8 Z" fill="#858585" stroke="#858585" stroke-width="0.6" stroke-linejoin="round"/></svg>
<div class="b" style="left:804.4px;top:851.4px;width:87.1px;height:29.1px;background:#fff;border:1px solid #d0d0d0;border-radius:5px;"></div>
<svg class="b" style="left:878.3px;top:857.0px;" width="8" height="18" viewBox="0 0 8 18"><path d="M0.6 5.2 L4 1 L7.4 5.2 Z" fill="#858585" stroke="#858585" stroke-width="0.6" stroke-linejoin="round"/><path d="M0.6 12.8 L4 17 L7.4 12.8 Z" fill="#858585" stroke="#858585" stroke-width="0.6" stroke-linejoin="round"/></svg>
<div class="b" style="left:931.4px;top:851.4px;width:100.4px;height:29.1px;background:#fff;border:1px solid #d0d0d0;border-radius:5px;"></div>
<svg class="b" style="left:1018.6px;top:857.0px;" width="8" height="18" viewBox="0 0 8 18"><path d="M0.6 5.2 L4 1 L7.4 5.2 Z" fill="#858585" stroke="#858585" stroke-width="0.6" stroke-linejoin="round"/><path d="M0.6 12.8 L4 17 L7.4 12.8 Z" fill="#858585" stroke="#858585" stroke-width="0.6" stroke-linejoin="round"/></svg>
<div class="b" style="left:1077.3px;top:851.4px;width:91.1px;height:29.1px;background:#fff;border:1px solid #d0d0d0;border-radius:5px;"></div>
<svg class="b" style="left:1155.2px;top:857.0px;" width="8" height="18" viewBox="0 0 8 18"><path d="M0.6 5.2 L4 1 L7.4 5.2 Z" fill="#858585" stroke="#858585" stroke-width="0.6" stroke-linejoin="round"/><path d="M0.6 12.8 L4 17 L7.4 12.8 Z" fill="#858585" stroke="#858585" stroke-width="0.6" stroke-linejoin="round"/></svg>
<div class="b" style="left:1203.1px;top:851.4px;width:66.6px;height:29.1px;background:#fff;border:1px solid #d0d0d0;border-radius:5px;"></div>
<svg class="b" style="left:1256.5px;top:857.0px;" width="8" height="18" viewBox="0 0 8 18"><path d="M0.6 5.2 L4 1 L7.4 5.2 Z" fill="#858585" stroke="#858585" stroke-width="0.6" stroke-linejoin="round"/><path d="M0.6 12.8 L4 17 L7.4 12.8 Z" fill="#858585" stroke="#858585" stroke-width="0.6" stroke-linejoin="round"/></svg>
<div class="b" style="left:1296.0px;top:851.4px;width:73.4px;height:29.1px;background:#fff;border:1px solid #d0d0d0;border-radius:5px;"></div>
<svg class="b" style="left:1356.2px;top:857.0px;" width="8" height="18" viewBox="0 0 8 18"><path d="M0.6 5.2 L4 1 L7.4 5.2 Z" fill="#858585" stroke="#858585" stroke-width="0.6" stroke-linejoin="round"/><path d="M0.6 12.8 L4 17 L7.4 12.8 Z" fill="#858585" stroke="#858585" stroke-width="0.6" stroke-linejoin="round"/></svg>
<div class="b" style="left:1401.6px;top:851.4px;width:43.1px;height:29.1px;background:#fcdcdc;border:1px solid #f2b9b9;border-radius:4px;"></div>
<div class="t" style="left:1223.1px;width:400px;text-align:center;top:860.32px;font-size:13.5px;line-height:13.5px;font-weight:700;color:#dc1f26;">No</div>
<div class="b" style="left:1512.4px;top:849.4px;width:165.6px;height:31.6px;background:#fff;border:1px solid #d0d0d0;border-radius:5px;"></div>
<div class="b" style="left:141.3px;top:900.2px;width:231.2px;height:30.3px;background:#fff;border:1px solid #d0d0d0;border-radius:5px;"></div>
<div class="t  r" style="left:177.2px;top:909.17px;font-size:13.8px;line-height:13.8px;color:#222;">Vitto</div>
<svg class="b" style="left:354.0px;top:912.6px;" width="10" height="7.0" viewBox="0 0 10 7.0"><path d="M1.2 1.2 L5.0 5.5 L8.8 1.2" fill="none" stroke="#6a6a6a" stroke-width="1.9" stroke-linecap="round" stroke-linejoin="round"/></svg>
<div class="b" style="left:402.5px;top:900.2px;width:82.9px;height:30.3px;background:#fff;border:1px solid #d0d0d0;border-radius:5px;"></div>
<svg class="b" style="left:472.2px;top:906.4px;" width="8" height="18" viewBox="0 0 8 18"><path d="M0.6 5.2 L4 1 L7.4 5.2 Z" fill="#858585" stroke="#858585" stroke-width="0.6" stroke-linejoin="round"/><path d="M0.6 12.8 L4 17 L7.4 12.8 Z" fill="#858585" stroke="#858585" stroke-width="0.6" stroke-linejoin="round"/></svg>
<div class="b" style="left:508.2px;top:900.2px;width:123.1px;height:30.3px;background:#fff;border:1px solid #d0d0d0;border-radius:5px;"></div>
<svg class="b" style="left:618.1px;top:906.4px;" width="8" height="18" viewBox="0 0 8 18"><path d="M0.6 5.2 L4 1 L7.4 5.2 Z" fill="#858585" stroke="#858585" stroke-width="0.6" stroke-linejoin="round"/><path d="M0.6 12.8 L4 17 L7.4 12.8 Z" fill="#858585" stroke="#858585" stroke-width="0.6" stroke-linejoin="round"/></svg>
<div class="b" style="left:670.8px;top:900.2px;width:83.6px;height:30.3px;background:#fff;border:1px solid #d0d0d0;border-radius:5px;"></div>
<svg class="b" style="left:741.2px;top:906.4px;" width="8" height="18" viewBox="0 0 8 18"><path d="M0.6 5.2 L4 1 L7.4 5.2 Z" fill="#858585" stroke="#858585" stroke-width="0.6" stroke-linejoin="round"/><path d="M0.6 12.8 L4 17 L7.4 12.8 Z" fill="#858585" stroke="#858585" stroke-width="0.6" stroke-linejoin="round"/></svg>
<div class="b" style="left:804.4px;top:900.2px;width:87.1px;height:30.3px;background:#fff;border:1px solid #d0d0d0;border-radius:5px;"></div>
<svg class="b" style="left:878.3px;top:906.4px;" width="8" height="18" viewBox="0 0 8 18"><path d="M0.6 5.2 L4 1 L7.4 5.2 Z" fill="#858585" stroke="#858585" stroke-width="0.6" stroke-linejoin="round"/><path d="M0.6 12.8 L4 17 L7.4 12.8 Z" fill="#858585" stroke="#858585" stroke-width="0.6" stroke-linejoin="round"/></svg>
<div class="b" style="left:931.4px;top:900.2px;width:100.4px;height:30.3px;background:#fff;border:1px solid #d0d0d0;border-radius:5px;"></div>
<svg class="b" style="left:1018.6px;top:906.4px;" width="8" height="18" viewBox="0 0 8 18"><path d="M0.6 5.2 L4 1 L7.4 5.2 Z" fill="#858585" stroke="#858585" stroke-width="0.6" stroke-linejoin="round"/><path d="M0.6 12.8 L4 17 L7.4 12.8 Z" fill="#858585" stroke="#858585" stroke-width="0.6" stroke-linejoin="round"/></svg>
<div class="b" style="left:1077.3px;top:900.2px;width:91.1px;height:30.3px;background:#fff;border:1px solid #d0d0d0;border-radius:5px;"></div>
<svg class="b" style="left:1155.2px;top:906.4px;" width="8" height="18" viewBox="0 0 8 18"><path d="M0.6 5.2 L4 1 L7.4 5.2 Z" fill="#858585" stroke="#858585" stroke-width="0.6" stroke-linejoin="round"/><path d="M0.6 12.8 L4 17 L7.4 12.8 Z" fill="#858585" stroke="#858585" stroke-width="0.6" stroke-linejoin="round"/></svg>
<div class="b" style="left:1203.1px;top:900.2px;width:66.6px;height:30.3px;background:#fff;border:1px solid #d0d0d0;border-radius:5px;"></div>
<svg class="b" style="left:1256.5px;top:906.4px;" width="8" height="18" viewBox="0 0 8 18"><path d="M0.6 5.2 L4 1 L7.4 5.2 Z" fill="#858585" stroke="#858585" stroke-width="0.6" stroke-linejoin="round"/><path d="M0.6 12.8 L4 17 L7.4 12.8 Z" fill="#858585" stroke="#858585" stroke-width="0.6" stroke-linejoin="round"/></svg>
<div class="b" style="left:1296.0px;top:900.2px;width:73.4px;height:30.3px;background:#fff;border:1px solid #d0d0d0;border-radius:5px;"></div>
<svg class="b" style="left:1356.2px;top:906.4px;" width="8" height="18" viewBox="0 0 8 18"><path d="M0.6 5.2 L4 1 L7.4 5.2 Z" fill="#858585" stroke="#858585" stroke-width="0.6" stroke-linejoin="round"/><path d="M0.6 12.8 L4 17 L7.4 12.8 Z" fill="#858585" stroke="#858585" stroke-width="0.6" stroke-linejoin="round"/></svg>
<div class="b" style="left:1401.6px;top:900.2px;width:43.1px;height:30.3px;background:#fcdcdc;border:1px solid #f2b9b9;border-radius:4px;"></div>
<div class="t" style="left:1223.1px;width:400px;text-align:center;top:909.72px;font-size:13.5px;line-height:13.5px;font-weight:700;color:#dc1f26;">No</div>
<div class="b" style="left:1512.4px;top:898.2px;width:165.6px;height:32.8px;background:#fff;border:1px solid #d0d0d0;border-radius:5px;"></div>
<div class="t  r" style="left:1524.7px;top:755.63px;font-size:13.9px;line-height:13.9px;color:#222;">63051 - Spese auto</div>
<svg class="b" style="left:1658.0px;top:759.1px;" width="10" height="7.0" viewBox="0 0 10 7.0"><path d="M1.2 1.2 L5.0 5.5 L8.8 1.2" fill="none" stroke="#6a6a6a" stroke-width="1.9" stroke-linecap="round" stroke-linejoin="round"/></svg>
<div class="t  r" style="left:1524.7px;top:805.28px;font-size:13.9px;line-height:13.9px;color:#222;">63051 - Spese auto</div>
<svg class="b" style="left:1658.0px;top:808.8px;" width="10" height="7.0" viewBox="0 0 10 7.0"><path d="M1.2 1.2 L5.0 5.5 L8.8 1.2" fill="none" stroke="#6a6a6a" stroke-width="1.9" stroke-linecap="round" stroke-linejoin="round"/></svg>
<div class="t  r" style="left:1521.8px;top:860.61px;font-size:12.8px;line-height:12.8px;color:#222;">63055 - Viaggi e Trasferte</div>
<div class="t  r" style="left:1518.0px;top:907.58px;font-size:14.5px;line-height:14.5px;color:#222;transform:scaleX(0.76);transform-origin:0 0;">630758 - Ristoranti - Ric fiscali</div>
<svg class="b" style="left:149.0px;top:754.9px;" width="14" height="14" viewBox="0 0 14 14"><path d="M2.5 1 L2.5 4 Q2.5 6 4.5 6.5 L12 13.5 M4.5 1 V5 M6.5 1 L6.5 4 Q6.5 6 4.5 6.5" fill="none" stroke="#666" stroke-width="1.3" stroke-linecap="round"/><path d="M9 6.5 L1.5 13.5" stroke="#666" stroke-width="1.5" stroke-linecap="round"/><ellipse cx="10.5" cy="4" rx="2.4" ry="3.2" transform="rotate(40 10.5 4)" fill="#666"/></svg>
<svg class="b" style="left:149.0px;top:908.4px;" width="14" height="14" viewBox="0 0 14 14"><path d="M2.5 1 L2.5 4 Q2.5 6 4.5 6.5 L12 13.5 M4.5 1 V5 M6.5 1 L6.5 4 Q6.5 6 4.5 6.5" fill="none" stroke="#666" stroke-width="1.3" stroke-linecap="round"/><path d="M9 6.5 L1.5 13.5" stroke="#666" stroke-width="1.5" stroke-linecap="round"/><ellipse cx="10.5" cy="4" rx="2.4" ry="3.2" transform="rotate(40 10.5 4)" fill="#666"/></svg>
<svg class="b" style="left:148.0px;top:804.5px;" width="16" height="14" viewBox="0 0 16 14"><path d="M2 6 L4 2 Q4.5 1 6 1 L10 1 Q11.5 1 12 2 L14 6 Q15 6.5 15 8 L15 11 L13 11 L13 12.5 L11 12.5 L11 11 L5 11 L5 12.5 L3 12.5 L3 11 L1 11 L1 8 Q1 6.5 2 6 Z" fill="#666"/><rect x="4.5" y="2.5" width="7" height="3" fill="#fff"/><circle cx="4" cy="8.5" r="1" fill="#fff"/><circle cx="12" cy="8.5" r="1" fill="#fff"/></svg>
<svg class="b" style="left:149.0px;top:858.0px;" width="14" height="16" viewBox="0 0 14 16"><rect x="1" y="1" width="12" height="12" rx="2" fill="none" stroke="#666" stroke-width="1.4"/><path d="M1 4 H13" stroke="#666" stroke-width="1.2"/><path d="M4 8 L5 10 M7 7 V10 M10 8 L9 10" stroke="#666" stroke-width="1"/><rect x="2" y="13" width="2" height="2" fill="#666"/><rect x="10" y="13" width="2" height="2" fill="#666"/></svg>
<div class="b" style="left:503.6px;top:222.4px;width:1012.1px;height:472.6px;background:#fff;border-radius:11px;box-shadow:0 4px 14px rgba(0,0,0,0.28), 0 0 2px rgba(0,0,0,0.3);"></div>
<div class="b" style="left:503.6px;top:222.4px;width:1012.1px;height:44.3px;background:#e7656f;border-radius:11px 11px 0 0;"></div>
<div class="t  r" style="left:529.5px;top:236.01px;font-size:18.3px;line-height:18.3px;color:#fff;-webkit-text-stroke:0.75px #fff;letter-spacing:0.45px;">Informazioni sulla persona</div>
<svg class="b" style="left:1485.0px;top:239.4px;" width="12" height="12" viewBox="0 0 12 12"><path d="M1.5 1.5 L10.5 10.5 M10.5 1.5 L1.5 10.5" stroke="#fff" stroke-width="2.6" stroke-linecap="square"/></svg>
<svg class="b" style="left:532.5px;top:283.0px;" width="156" height="156" viewBox="0 0 100 100">
<defs>
 <clipPath id="clipp2"><circle cx="50" cy="50" r="50"/></clipPath>
 <linearGradient id="bgp2" x1="0.8" y1="0" x2="0.2" y2="1"><stop offset="0" stop-color="#d5d5d7"/><stop offset="1" stop-color="#e8e8e8"/></linearGradient>
 <radialGradient id="skp2" cx="0.45" cy="0.4" r="0.7"><stop offset="0" stop-color="#f3d3c2"/><stop offset="0.55" stop-color="#e9bea8"/><stop offset="0.85" stop-color="#d49f86"/><stop offset="1" stop-color="#b57c63"/></radialGradient>
 <linearGradient id="jkp2" x1="0" y1="0" x2="1" y2="0.3"><stop offset="0" stop-color="#393636"/><stop offset="1" stop-color="#282525"/></linearGradient>
 <filter id="blp2" x="-20%" y="-20%" width="140%" height="140%"><feGaussianBlur stdDeviation="1.3"/></filter>
 <filter id="bl2p2" x="-20%" y="-20%" width="140%" height="140%"><feGaussianBlur stdDeviation="0.45"/></filter>
</defs>
<g clip-path="url(#clipp2)">
 <rect x="0" y="0" width="100" height="100" fill="url(#bgp2)"/>
 <path d="M38 64 L71 56 L73 84 L41 86 Z" fill="#c08a72"/>
 <path d="M47 73 L71 60 L72 78 L50 83 Z" fill="#8f5f4c" filter="url(#blp2)" opacity="0.6"/>
 <path d="M31 38 C32 28 40 21 51 20.5 C62 21 70 28 71.5 40 C72 52 70 61 65 68 C60 73 54 75 48 74.5 C42 73.5 37 69 34.5 62 C32 55 30.5 47 31 38 Z" fill="url(#skp2)"/>
 <path d="M71.5 42 C75.5 39 78.5 44 77.5 50 C76.5 56 73 58.5 70.5 57.5 Z" fill="#cc957b"/>
 <g filter="url(#bl2p2)">
 <path d="M30.5 46 L29 38 L28.5 30 L26 25 L29.5 22 L31 17 L35 13 L40 10.5 L44 9.5 L48 7 L52 8 L55 3.5 L57 8 L61 8.5 L66 11 L70 14 L73 19 L76 25 L77 31 L77 40 L75.5 46 L73 52 L70.5 54 L71 45 L70 36 L67 28.5 L61 23.5 L52 21.8 L43 22.8 L37 26 L33 31 L31.5 38 Z" fill="#2d201a"/>
 <path d="M52 9 L58 4.5 L57 10 Z M44 10.5 L40.5 6.5 L47 8.5 Z M66 12 L70.5 9 L69.5 14.5 Z M29 24 L25.5 21 L31 20 Z" fill="#2d201a"/>
 </g>
 <path d="M35.5 42 Q39.5 39.6 43.5 42 Q39.5 43.6 35.5 42 Z" fill="#f4eeea"/>
 <path d="M53.5 41.6 Q57.5 39.2 61.5 41.6 Q57.5 43.2 53.5 41.6 Z" fill="#f4eeea"/>
 <circle cx="40" cy="41.7" r="1.45" fill="#2e211b"/>
 <circle cx="57.8" cy="41.3" r="1.45" fill="#2e211b"/>
 <path d="M35.5 42 Q39.5 39.4 43.5 42" stroke="#3a2720" stroke-width="0.8" fill="none"/>
 <path d="M53.5 41.6 Q57.5 39 61.5 41.6" stroke="#3a2720" stroke-width="0.8" fill="none"/>
 <path d="M34.5 38 Q39 35.8 44 37.5" stroke="#4a3026" stroke-width="1.4" fill="none"/>
 <path d="M52.5 37.2 Q57.5 35 63 37.2" stroke="#4a3026" stroke-width="1.4" fill="none"/>
 <path d="M49 43 Q47 50 46 52.5 Q49 55 53.5 53.5" stroke="#a9705a" stroke-width="1.5" fill="none" opacity="0.35" filter="url(#blp2)"/>
 <path d="M38 58 Q48 54.5 60 57 L59.5 59.2 Q48 57 38.5 59.8 Z" fill="#5e4034" opacity="0.8" filter="url(#bl2p2)"/>
 <path d="M38.5 59.5 Q49 67 60 59 Q49 62.5 38.5 59.5 Z" fill="#faf6f3"/>
 <path d="M39 62.5 Q49 69 58.5 62 L58 68 Q54 75.5 48 75.5 Q42 74.5 39.5 68 Z" fill="#4a362c" opacity="0.72" filter="url(#bl2p2)"/>
 <path d="M45 64.5 Q49 66.5 53 64.3 Q53 67.5 49 68 Q45.5 67.5 45 64.5 Z" fill="#e6bda8" opacity="0.55"/>
 <path d="M0 86 L12 80 L26 77 L38 73 L43 82 L46 100 L0 100 Z" fill="url(#jkp2)"/>
 <path d="M71 61 L78 69 L88 78 L100 83 L100 100 L54 100 L62 86 L68 73 Z" fill="#2a2727"/>
 <path d="M38 76 L44 80 L58 80 L66 71 L56 100 L45 100 Z" fill="#141313"/>
 <path d="M38 73 L43 82 L47 100 L43 100 L36.5 78 Z" fill="#333030"/>
 <path d="M71 61 L73 68 L58 100 L54.5 100 L68 73 Z" fill="#333030"/>
</g></svg>
<div class="t " style="left:704.2px;top:283.69px;font-size:13.6px;line-height:13.6px;font-weight:700;color:#1a1a1a;">Nome</div>
<div class="t " style="left:704.2px;top:305.49px;font-size:13.6px;line-height:13.6px;font-weight:700;color:#1a1a1a;">Società</div>
<div class="t " style="left:704.2px;top:327.29px;font-size:13.6px;line-height:13.6px;font-weight:700;color:#1a1a1a;">Direzione</div>
<div class="t " style="left:704.2px;top:349.19px;font-size:13.6px;line-height:13.6px;font-weight:700;color:#1a1a1a;">Unità Org.</div>
<div class="t " style="left:704.2px;top:387.69px;font-size:13.6px;line-height:13.6px;font-weight:700;color:#1a1a1a;">Percorso gerarchico</div>
<div class="t " style="left:704.2px;top:408.89px;font-size:13.6px;line-height:13.6px;font-weight:700;color:#1a1a1a;">Ruolo</div>
<div class="t " style="left:704.2px;top:429.49px;font-size:13.6px;line-height:13.6px;font-weight:700;color:#1a1a1a;">Tipo rapporto</div>
<div class="t " style="left:704.2px;top:450.49px;font-size:13.6px;line-height:13.6px;font-weight:700;color:#1a1a1a;">Tipo part-time</div>
<div class="t " style="left:704.2px;top:472.19px;font-size:13.6px;line-height:13.6px;font-weight:700;color:#1a1a1a;">E-mail</div>
<div class="t " style="left:704.2px;top:494.09px;font-size:13.6px;line-height:13.6px;font-weight:700;color:#1a1a1a;">Indirizzo</div>
<div class="t " style="left:704.2px;top:534.19px;font-size:13.6px;line-height:13.6px;font-weight:700;color:#1a1a1a;">Data inserimento</div>
<div class="t " style="left:704.2px;top:556.09px;font-size:13.6px;line-height:13.6px;font-weight:700;color:#1a1a1a;">Stato persona</div>
<div class="t  r" style="left:848.0px;top:283.22px;font-size:14.15px;line-height:14.15px;color:#222;">73026 - ABATE, LUCA</div>
<div class="t  r" style="left:848.0px;top:305.02px;font-size:14.15px;line-height:14.15px;color:#222;">Demo Company</div>
<div class="t  r" style="left:848.0px;top:326.82px;font-size:14.15px;line-height:14.15px;color:#222;">Commerciale</div>
<div class="t  r" style="left:848.0px;top:348.72px;font-size:14.15px;line-height:14.15px;color:#222;">R&amp;D</div>
<div class="t  r" style="left:848.0px;top:387.22px;font-size:14.15px;line-height:14.15px;color:#222;">Amministratore delegato &gt; R&amp;D</div>
<div class="t  r" style="left:848.0px;top:408.42px;font-size:14.15px;line-height:14.15px;color:#222;">Business Manager</div>
<div class="t  r" style="left:848.0px;top:429.02px;font-size:14.15px;line-height:14.15px;color:#222;">Tempo indeterminato</div>
<div class="t  r" style="left:848.0px;top:450.02px;font-size:14.15px;line-height:14.15px;color:#222;">Full-time</div>
<div class="t  r" style="left:848.0px;top:493.62px;font-size:14.15px;line-height:14.15px;color:#222;">Via G. Palatucci 20; 83020 Pago del Vallo</div>
<div class="t  r" style="left:848.0px;top:513.02px;font-size:14.15px;line-height:14.15px;color:#222;">di Lauro (AV)</div>
<div class="t  r" style="left:848.0px;top:533.72px;font-size:14.15px;line-height:14.15px;color:#222;">Lunedì&nbsp;&nbsp;11/10/2004</div>
<div class="t  r" style="left:874.5px;top:472.19px;font-size:13.6px;line-height:13.6px;color:#222;">luca.abate@democompany.it</div>
<svg class="b" style="left:971.5px;top:406.5px;" width="18" height="18" viewBox="0 0 18 18"><circle cx="9.0" cy="9.0" r="8.2" fill="none" stroke="#8a8a8a" stroke-width="1.3"/><rect x="8.15" y="7.38" width="1.7" height="5.94" fill="#8a8a8a"/><rect x="7.1" y="7.38" width="1.9" height="1" fill="#8a8a8a"/><rect x="7.0" y="12.959999999999999" width="4" height="1.1" fill="#8a8a8a"/><circle cx="9.0" cy="4.68" r="1.15" fill="#8a8a8a"/></svg>
<svg class="b" style="left:847.7px;top:472.2px;" width="19" height="15" viewBox="0 0 19 15"><rect x="0.7" y="0.7" width="17.6" height="13.6" rx="1.5" fill="none" stroke="#777" stroke-width="1.3"/><path d="M1 1.5 L9.5 8.5 L18 1.5 M1 13.5 L7 7 M18 13.5 L12 7" fill="none" stroke="#777" stroke-width="1.1"/></svg>
<div class="b" style="left:703.4px;top:375.0px;width:422.6px;height:1.0px;background:#dedede;"></div>
<div class="b" style="left:847.7px;top:553.0px;width:75.4px;height:21.4px;background:#d8f6d8;border-radius:5px;"></div>
<div class="b" style="left:854.3px;top:556.5px;width:15px;height:15px;border-radius:50%;background:#11dd11;"></div>
<div class="t  r" style="left:877.0px;top:556.65px;font-size:14px;line-height:14px;color:#222;">Attivo</div>
<div class="t " style="left:1147.4px;top:283.30px;font-size:13.7px;line-height:13.7px;font-weight:700;color:#1a1a1a;">Dettaglio</div>
<div class="t " style="left:1147.4px;top:305.40px;font-size:13.7px;line-height:13.7px;font-weight:700;color:#1a1a1a;">Sede aziendale</div>
<div class="t " style="left:1147.4px;top:327.30px;font-size:13.7px;line-height:13.7px;font-weight:700;color:#1a1a1a;">Team leader</div>
<div class="t " style="left:1147.4px;top:349.40px;font-size:13.7px;line-height:13.7px;font-weight:700;color:#1a1a1a;">Resp. Unità Org.</div>
<div class="t " style="left:1147.4px;top:406.30px;font-size:13.7px;line-height:13.7px;font-weight:700;color:#1a1a1a;">Tipo persona</div>
<div class="t " style="left:1147.4px;top:470.80px;font-size:13.7px;line-height:13.7px;font-weight:700;color:#1a1a1a;">Anzianità aziendale</div>
<div class="t " style="left:1147.4px;top:534.20px;font-size:13.7px;line-height:13.7px;font-weight:700;color:#1a1a1a;">Primo inserimento</div>
<svg class="b" style="left:1277.8px;top:279.5px;" width="19.600000000000136" height="17.600000000000023" viewBox="0 0 19.600000000000136 17.600000000000023"><rect x="0.7" y="0.7" width="18.200000000000138" height="16.200000000000024" rx="2.5" fill="#fff" stroke="#999" stroke-width="1.3"/><path d="M5.292000000000037 8.800000000000011 H14.112000000000098 M10.192000000000071 5.2800000000000065 L14.3080000000001 8.800000000000011 L10.192000000000071 12.320000000000014" fill="none" stroke="#999" stroke-width="1.3"/></svg>
<div class="t  r" style="left:1277.8px;top:305.86px;font-size:14.1px;line-height:14.1px;color:#222;">Milano Pezzotti 2</div>
<div class="t  r" style="left:1277.8px;top:328.17px;font-size:13.5px;line-height:13.5px;color:#222;">ANGELINI, Olga</div>
<svg class="b" style="left:1384.8px;top:324.5px;" width="19" height="19" viewBox="0 0 19 19"><circle cx="9.5" cy="9.5" r="8.7" fill="none" stroke="#8a8a8a" stroke-width="1.3"/><rect x="8.65" y="7.789999999999999" width="1.7" height="6.2700000000000005" fill="#8a8a8a"/><rect x="7.6" y="7.789999999999999" width="1.9" height="1" fill="#8a8a8a"/><rect x="7.5" y="13.68" width="4" height="1.1" fill="#8a8a8a"/><circle cx="9.5" cy="4.94" r="1.15" fill="#8a8a8a"/></svg>
<div class="t  r" style="left:1277.8px;top:349.93px;font-size:13.9px;line-height:13.9px;color:#222;">BRUSCHI POLIDORI, MATTHIAS</div>
<div class="b" style="left:1146.4px;top:375.0px;width:343.6px;height:1.0px;background:#dedede;"></div>
<div class="t  r" style="left:1281.5px;top:406.36px;font-size:14.1px;line-height:14.1px;color:#222;">Dipendente</div>
<div class="t  r" style="left:1285.2px;top:470.63px;font-size:13.9px;line-height:13.9px;color:#222;">21,0 Anni</div>
<div class="t  r" style="left:1284.2px;top:533.78px;font-size:14.2px;line-height:14.2px;color:#222;">Lunedì 11/10/2004</div>
<div class="b" style="left:701.0px;top:581.8px;width:783.8px;height:70.8px;background:#fff;border:1px solid #dcdcdc;border-radius:8px;"></div>
<div class="b" style="left:701.0px;top:581.8px;width:783.8px;height:34.2px;background:#e7656f;border-radius:8px 8px 0 0;"></div>
<div class="b" style="left:992.8px;top:581.8px;width:1.0px;height:70.8px;background:#e3e3e3;"></div>
<div class="b" style="left:992.8px;top:581.8px;width:1.0px;height:34.2px;background:#f3a8ae;"></div>
<div class="b" style="left:1276.8px;top:581.8px;width:1.0px;height:70.8px;background:#e3e3e3;"></div>
<div class="b" style="left:1276.8px;top:581.8px;width:1.0px;height:34.2px;background:#f3a8ae;"></div>
<div class="t" style="left:635.0px;width:400px;text-align:center;top:593.83px;font-size:13.2px;line-height:13.2px;font-weight:700;color:#fff;">Tipo contatto</div>
<div class="t" style="left:932.0px;width:400px;text-align:center;top:593.66px;font-size:13.4px;line-height:13.4px;font-weight:700;color:#fff;">Numero</div>
<div class="t" style="left:1184.0px;width:400px;text-align:center;top:594.62px;font-size:13.8px;line-height:13.8px;font-weight:700;color:#fff;">Operatore</div>
<div class="t  r" style="left:711.7px;top:627.75px;font-size:14px;line-height:14px;color:#222;">Ufficio</div>
<div class="t  r" style="left:1009.0px;top:628.90px;font-size:13.7px;line-height:13.7px;color:#222;">+39 364 345 2674</div>
<svg class="b" style="left:700.4px;top:664.0px;" width="14" height="18" viewBox="0 0 14 18"><path d="M2 0.8 H8.5 L13.2 5.5 V16 Q13.2 17.2 12 17.2 H2 Q0.8 17.2 0.8 16 V2 Q0.8 0.8 2 0.8 Z" fill="none" stroke="#8a8a8a" stroke-width="1.3" stroke-linejoin="round"/><path d="M3.5 8.5 L9.5 15 M9.5 8.5 L3.5 15" stroke="#8a8a8a" stroke-width="1.1"/></svg>
<svg class="b" style="left:733.8px;top:664.0px;" width="16" height="18" viewBox="0 0 16 18"><path d="M2 0.8 H9.5 L15 6.3 V16 Q15 17.2 13.8 17.2 H2 Q0.8 17.2 0.8 16 V2 Q0.8 0.8 2 0.8 Z" fill="none" stroke="#8a8a8a" stroke-width="1.3" stroke-linejoin="round"/><path d="M9.5 0.8 V4.5 Q9.5 6.3 11 6.3 H15" fill="none" stroke="#8a8a8a" stroke-width="1"/><path d="M3 17 V10 H15 M3 13.5 H15 M8.5 10 V17" fill="none" stroke="#8a8a8a" stroke-width="1.1"/></svg>
<svg class="b" style="left:768.6px;top:664.0px;" width="19" height="18" viewBox="0 0 19 18"><rect x="4.3" y="0.8" width="10.4" height="5" rx="1.5" fill="none" stroke="#8a8a8a" stroke-width="1.3"/><rect x="0.8" y="5.5" width="17.4" height="7.5" rx="1.8" fill="none" stroke="#8a8a8a" stroke-width="1.3"/><rect x="4.3" y="9.2" width="10.4" height="8" rx="1.5" fill="#fff" stroke="#8a8a8a" stroke-width="1.3"/><path d="M6.5 12.8 H12.5" stroke="#8a8a8a" stroke-width="1.3"/></svg>
</div></body></html>
